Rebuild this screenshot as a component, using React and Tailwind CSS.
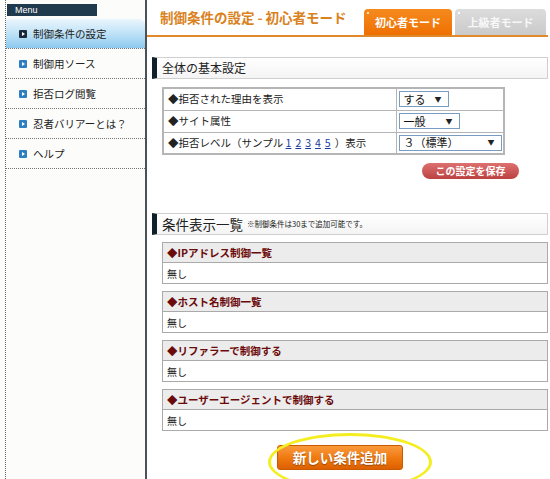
import React from 'react';

const font = { fontFamily: '"Noto Sans CJK JP", "Noto Sans", sans-serif' };

const menu = [
  { label: '制御条件の設定', active: true },
  { label: '制御用ソース' },
  { label: '拒否ログ閲覧' },
  { label: '忍者バリアーとは？' },
  { label: 'ヘルプ' },
];

const lists = ['IPアドレス制御一覧', 'ホスト名制御一覧', 'リファラーで制御する', 'ユーザーエージェントで制御する'];

function Bullet({ active }) {
  return (
    <span className={`flex h-[8px] w-[8px] items-center justify-center rounded-[1px] ${active ? 'bg-[#1b2a3a]' : 'bg-[#2d7fc1]'}`}>
      <span className="h-0 w-0 border-y-[2.5px] border-l-[3.5px] border-y-transparent border-l-white ml-[1px]" />
    </span>
  );
}

function Select({ label, width }) {
  return (
    <div className={`flex h-[16px] items-center justify-between border border-[#7a9cc0] bg-white pl-[4px] pr-[6px] ${width}`}>
      <span className="text-[11px] leading-none text-[#111]">{label}</span>
      <span className="text-[7px] leading-none text-[#222]">▼</span>
    </div>
  );
}

function SectionHead({ children }) {
  return (
    <div className="flex h-[22px] items-center border border-[#cfcfcf] border-l-[5px] border-l-[#0f1f2c] bg-gradient-to-b from-white to-[#f4f4f4] pl-[5px]">
      {children}
    </div>
  );
}

export default function App() {
  return (
    <div className="relative flex h-[479px] w-[550px] overflow-hidden bg-white text-[#222]" style={font}>
      {/* sidebar */}
      <aside className="w-[147px] shrink-0 border-r-[2px] border-[#4a5257] bg-[#fcfdfb] pl-[5px]">
        <div className="h-full border-l border-dotted border-[#666] pt-[4px]">
          <div className="ml-[1px] h-[12px] w-[90px] bg-[#1f3a4d] pl-[8px] text-[9px] leading-[12px] text-white" style={{ fontFamily: '"Liberation Sans", sans-serif' }}>
            Menu
          </div>
          <ul className="mt-[3px]">
            {menu.map((m) => (
              <li
                key={m.label}
                className={`flex h-[30px] items-center gap-[6px] border-b border-dotted border-[#777] pl-[13px] text-[10.5px] ${
                  m.active ? 'rounded-tr-[6px] bg-gradient-to-b from-[#eaf6fd] via-[#bfe2f7] to-[#8cc9ee]' : ''
                }`}
              >
                <Bullet active={m.active} />
                <span>{m.label}</span>
              </li>
            ))}
          </ul>
        </div>
      </aside>

      {/* main */}
      <main className="flex-1 pr-[2px]">
        <div className="flex h-[37px] items-end justify-between border-b-[2px] border-[#e08a2c] pl-[13px]">
          <h1 className="mb-[8px] text-[13.5px] font-bold text-[#d9821e]">制御条件の設定 - 初心者モード</h1>
          <div className="mr-[2px] flex gap-[3px]">
            <div className="relative flex h-[26px] w-[88px] items-center justify-center rounded-t-[4px] bg-gradient-to-b from-[#f68a1c] to-[#ee7000] text-[11px] font-bold text-white">
              <span className="absolute left-[3px] top-[3px] h-[2px] w-[2px] bg-[#ffe2c0]" />
              初心者モード
            </div>
            <div className="relative flex h-[26px] w-[91px] items-center justify-center rounded-t-[4px] bg-gradient-to-b from-[#dcdcdc] to-[#cacaca] text-[11px] font-bold text-[#f8f8f8]">
              <span className="absolute left-[3px] top-[3px] h-[2px] w-[2px] bg-white" />
              上級者モード
            </div>
          </div>
        </div>

        <div className="pl-[5px]">
          <div className="mt-[20px]">
            <SectionHead>
              <span className="text-[12px]">全体の基本設定</span>
            </SectionHead>
          </div>

          <table className="ml-[10px] mt-[8px] w-[343px] border-collapse border-[2px] border-[#b5b5b5] text-[10.5px]">
            <tbody>
              {[
                ['拒否された理由を表示', <Select label="する" width="w-[50px]" />],
                ['サイト属性', <Select label="一般" width="w-[61px]" />],
                [
                  <>
                    拒否レベル（サンプル{' '}
                    {[1, 2, 3, 4, 5].map((n) => (
                      <a key={n} className="mr-[4px] text-[#1a3a9a] underline">
                        {n}
                      </a>
                    ))}
                    ）表示
                  </>,
                  <Select label="３（標準）" width="w-[103px]" />,
                ],
              ].map(([l, r], i) => (
                <tr key={i} className="h-[22px]">
                  <td className="w-[233px] border border-[#b5b5b5] pl-[4px]">◆{l}</td>
                  <td className="border border-[#b5b5b5] pl-[2px]">{r}</td>
                </tr>
              ))}
            </tbody>
          </table>

          <div className="mt-[8px] flex justify-end pr-[29px]">
            <button className="h-[16px] w-[97px] rounded-full bg-gradient-to-b from-[#dd7070] to-[#bb4141] text-[10px] font-bold leading-none text-white">
              この設定を保存
            </button>
          </div>

          <div className="mt-[34px]">
            <SectionHead>
              <span className="text-[13.5px]">条件表示一覧</span>
              <span className="ml-[4px] text-[7.5px]">※制御条件は30まで追加可能です。</span>
            </SectionHead>
          </div>

          <div className="ml-[10px] mt-[7px] flex flex-col gap-[7px]">
            {lists.map((t) => (
              <div key={t} className="border border-[#aaaaaa]">
                <div className="flex h-[20px] items-center border-b border-[#aaaaaa] bg-[#ececec] pl-[4px] text-[10.5px] font-bold text-[#6b0a0a]">
                  ◆{t}
                </div>
                <div className="flex h-[20px] items-center bg-white pl-[4px] text-[10px]">無し</div>
              </div>
            ))}
          </div>

          <div className="mt-[14px] flex justify-center pr-[20px]">
            <button className="h-[25px] w-[126px] rounded-[3px] border border-[#c85a00] bg-gradient-to-b from-[#f99a3a] via-[#f07a10] to-[#dd6000] text-[13.5px] font-bold text-white [text-shadow:0_1px_1px_rgba(0,0,0,0.35)]">
              新しい条件追加
            </button>
          </div>
        </div>
      </main>

      {/* hand-drawn highlight */}
      <div className="pointer-events-none absolute left-[268px] top-[433px] h-[58px] w-[164px] rounded-[50%] border-[3px] border-[#f4ee20]" />
    </div>
  );
}
